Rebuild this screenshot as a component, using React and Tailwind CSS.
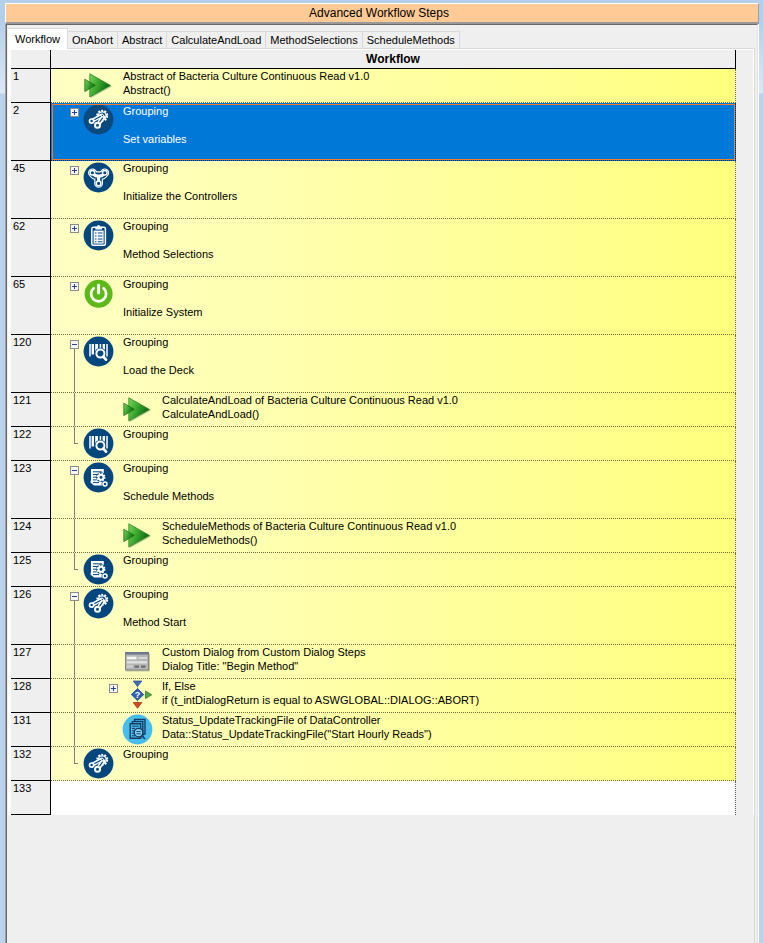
import React, { useState } from "react";

const FONT = "font-['Liberation_Sans',Arial,sans-serif]";

function Disc({ color = "#04477f", children }) {
  return (
    <svg width="32" height="32" viewBox="0 0 32 32" aria-hidden="true">
      <circle cx="15.5" cy="15.5" r="14.9" fill={color} />
      {children}
    </svg>
  );
}

function GearsIcon({ dark }) {
  const base = dark ? "#0a4a7e" : "#04477f";
  return (
    <Disc color={base}>
      <circle cx="19.2" cy="11.8" r="5" fill="none" stroke="#fff" strokeWidth="2" strokeDasharray="1.9 1.24" />
      <circle cx="19.2" cy="11.8" r="3.9" fill={base} stroke="#fff" strokeWidth="1.3" />
      <path d="M8.8 17 L18.6 11.6 M14.8 21.2 L20.4 13.2" stroke="#fff" strokeWidth="4" strokeLinecap="round" />
      <path d="M11.2 15.8 L17.8 12.2 M16 19 L19.8 13.6" stroke={base} strokeWidth="1.2" />
      <circle cx="8.6" cy="17.1" r="2.1" fill={base} stroke="#fff" strokeWidth="1.7" />
      <circle cx="14.5" cy="21.2" r="2.5" fill={base} stroke="#fff" strokeWidth="2" />
      <circle cx="19.4" cy="11.6" r="1.1" fill={base} stroke="#fff" strokeWidth="1" />
    </Disc>
  );
}

function ControllersIcon() {
  return (
    <Disc>
      <g strokeLinecap="round" strokeLinejoin="round" fill="none">
        <path d="M9.4 10.8 Q12 14.5 15.6 13.6 Q19.2 14.5 21.8 10.8 M15.6 14 V21.4" stroke="#fff" strokeWidth="8.8" />
        <path d="M9.4 10.8 Q12 14.5 15.6 13.6 Q19.2 14.5 21.8 10.8 M15.6 14 V21.4" stroke="#04477f" strokeWidth="6.4" />
        <path d="M9.4 10.8 Q12 14.5 15.6 14 Q19.2 14.5 21.8 10.8 M15.6 14 V21.4" stroke="#fff" strokeWidth="3" />
      </g>
      <g fill="#04477f" stroke="#fff" strokeWidth="1.5">
        <circle cx="9.4" cy="10.8" r="2.3" />
        <circle cx="21.8" cy="10.8" r="2.3" />
        <circle cx="15.6" cy="21.4" r="2.3" />
      </g>
    </Disc>
  );
}

function ClipboardIcon() {
  return (
    <Disc>
      <rect x="8.8" y="7.3" width="13.6" height="18" rx="1.5" fill="none" stroke="#fff" strokeWidth="1.5" />
      <path d="M12.3 6.8 h1.8 a1.5 1.8 0 0 1 3 0 h1.8 v2.8 h-6.6z" fill="#fff" />
      <path d="M10.6 10.6 h10 v13 h-10z" fill="#fff" />
      <path d="M11.8 13h1.7M11.8 16h1.7M11.8 19h1.7M11.8 21.8h1.7M14.8 13h4.7M14.8 16h4.7M14.8 19h4.7M14.8 21.8h4.7" stroke="#04477f" strokeWidth="1.1" />
    </Disc>
  );
}

function PowerIcon() {
  return (
    <svg width="32" height="32" viewBox="0 0 32 32" aria-hidden="true">
      <circle cx="15.6" cy="15.8" r="14" fill="#5cb917" />
      <path d="M10.6 10.2 A7.5 7.5 0 1 0 20.6 10.2" fill="none" stroke="#fff" strokeWidth="2.7" strokeLinecap="round" />
      <path d="M15.6 7.2 V15" stroke="#fff" strokeWidth="2.9" strokeLinecap="round" />
    </svg>
  );
}

function BarcodeIcon() {
  return (
    <Disc>
      <path d="M7 8v12.5M17.4 8v6M24 8v12.5" stroke="#fff" strokeWidth="1.5" />
      <path d="M9.8 8v10.5M20.8 8v10.5" stroke="#fff" strokeWidth="2.4" />
      <path d="M13.6 8v10.5" stroke="#fff" strokeWidth="2.8" />
      <circle cx="17.4" cy="17.6" r="5.8" fill="#04477f" />
      <circle cx="17.4" cy="17.6" r="4" fill="none" stroke="#fff" strokeWidth="2" />
      <path d="M20.3 20.6 L23 23.6" stroke="#fff" strokeWidth="2.8" strokeLinecap="round" />
    </Disc>
  );
}

function ScheduleIcon() {
  return (
    <Disc>
      <path d="M8 7 H20.8 V23.5 H11 L7.4 20.5 L8 18z" fill="#fff" />
      <path d="M10 9.8h8.8M10 12.5h4M10 15.2h3M10 17.9h3.6M10 20.6h6" stroke="#04477f" strokeWidth="1" />
      <circle cx="18" cy="15.2" r="4.9" fill="#04477f" />
      <circle cx="18" cy="15.2" r="3.7" fill="none" stroke="#fff" strokeWidth="1.6" strokeDasharray="1.6 1.3" />
      <circle cx="18" cy="15.2" r="2.5" fill="none" stroke="#fff" strokeWidth="2" />
      <circle cx="22" cy="22" r="3.4" fill="#04477f" />
      <circle cx="22" cy="22" r="2" fill="none" stroke="#fff" strokeWidth="1.5" />
    </Disc>
  );
}

function ArrowIcon() {
  return (
    <svg width="32" height="32" viewBox="0 0 32 32" aria-hidden="true">
      <defs>
        <linearGradient id="arrowFill" x1="0" y1="0" x2="1" y2="0.4">
          <stop offset="0" stopColor="#7bd65c" />
          <stop offset="0.5" stopColor="#37a52b" />
          <stop offset="1" stopColor="#0d6410" />
        </linearGradient>
      </defs>
      <path d="M8 6 L29 16.5 L8 28z" fill="#555" opacity="0.3" />
      <path d="M6.8 3.8 L27.6 15.5 L6.8 27z" fill="url(#arrowFill)" stroke="#2c8a22" strokeWidth="0.8" />
      <path d="M1.8 9.2 L12.4 15.3 L1.8 21.6z" fill="url(#arrowFill)" stroke="#25701c" strokeWidth="0.8" />
    </svg>
  );
}

function DialogIcon() {
  return (
    <svg width="32" height="32" viewBox="0 0 32 32" aria-hidden="true">
      <rect x="4" y="8" width="24" height="17.5" fill="#777" opacity="0.45" />
      <rect x="3.5" y="6.5" width="23" height="17.5" fill="#b4b5b5" stroke="#85878a" />
      <rect x="3" y="6" width="24" height="2.5" fill="#6a7990" />
      <path d="M5 12h9.5" stroke="#f6f6f6" strokeWidth="2.6" />
      <path d="M16.5 12h8.5" stroke="#e2e2e2" strokeWidth="1.6" />
      <path d="M5 16.3h20" stroke="#dedede" strokeWidth="2.4" />
      <path d="M5 20.5h6" stroke="#d0d0d0" strokeWidth="2" />
      <path d="M12.5 20.7h4.5M19 20.7h4.5" stroke="#6e6e6e" strokeWidth="2.2" />
    </svg>
  );
}

function BranchIcon() {
  return (
    <svg width="32" height="32" viewBox="0 0 32 32" aria-hidden="true">
      <path d="M15.5 6v18M10 15h14" stroke="#b9c6b0" strokeWidth="1" />
      <path d="M11.2 1h8.6l-4.3 5.6z" fill="#3d6dbb" stroke="#264a88" strokeWidth="0.7" />
      <path d="M11.2 22.5h8.6l-4.3 5.8z" fill="#d5471c" stroke="#8c2c10" strokeWidth="0.7" />
      <path d="M23.5 11 L29.8 14.8 L23.5 18.6z" fill="#4fa93c" stroke="#2b6f22" strokeWidth="0.7" />
      <path d="M15.5 8.6 L21.7 14.6 L15.5 20.6 L9.3 14.6z" fill="#2f62b4" stroke="#1d4384" strokeWidth="0.8" />
      <text x="15.5" y="17.8" fontSize="9" fontWeight="bold" fill="#fff" textAnchor="middle" fontFamily="Liberation Sans, sans-serif">?</text>
    </svg>
  );
}

function TrackingIcon() {
  return (
    <Disc color="#46bdec">
      <g fill="#46bdec" stroke="#173a63" strokeWidth="1.4">
        <path d="M12.6 5.5h10.4v14.5H12.6z" />
        <path d="M10.4 7.6h10.4v14.5H10.4z" />
        <path d="M8.2 9.7h10.4v14.5H8.2z" />
      </g>
      <path d="M10 12.2h6.6M10 14.4h3M10 16.8h2M10 19.2h2M10 21.8h3" stroke="#173a63" strokeWidth="1" />
      <circle cx="16.6" cy="18.6" r="4.3" fill="#7fd3f3" stroke="#173a63" strokeWidth="1.3" />
      <path d="M14.4 17.6h4.4M14.4 19.8h4.4" stroke="#173a63" strokeWidth="0.9" />
      <path d="M19.8 21.8L23 25" stroke="#173a63" strokeWidth="1.7" />
    </Disc>
  );
}

const ROWS = [
  { n: 1, icon: ArrowIcon, lines: ["Abstract of Bacteria Culture Continuous Read v1.0", "Abstract()"] },
  { n: 2, icon: GearsIcon, toggle: "+", tall: true, selected: true, lines: ["Grouping", "", "Set variables"] },
  { n: 45, icon: ControllersIcon, toggle: "+", tall: true, lines: ["Grouping", "", "Initialize the Controllers"] },
  { n: 62, icon: ClipboardIcon, toggle: "+", tall: true, lines: ["Grouping", "", "Method Selections"] },
  { n: 65, icon: PowerIcon, toggle: "+", tall: true, lines: ["Grouping", "", "Initialize System"] },
  { n: 120, icon: BarcodeIcon, toggle: "-", tall: true, lines: ["Grouping", "", "Load the Deck"] },
  { n: 121, icon: ArrowIcon, child: true, lines: ["CalculateAndLoad of Bacteria Culture Continuous Read v1.0", "CalculateAndLoad()"] },
  { n: 122, icon: BarcodeIcon, end: true, lines: ["Grouping"] },
  { n: 123, icon: ScheduleIcon, toggle: "-", tall: true, lines: ["Grouping", "", "Schedule Methods"] },
  { n: 124, icon: ArrowIcon, child: true, lines: ["ScheduleMethods of Bacteria Culture Continuous Read v1.0", "ScheduleMethods()"] },
  { n: 125, icon: ScheduleIcon, end: true, lines: ["Grouping"] },
  { n: 126, icon: GearsIcon, toggle: "-", tall: true, lines: ["Grouping", "", "Method Start"] },
  { n: 127, icon: DialogIcon, child: true, lines: ["Custom Dialog from Custom Dialog Steps", 'Dialog Title: "Begin Method"'] },
  { n: 128, icon: BranchIcon, child: true, toggle: "+", lines: ["If, Else", "if (t_intDialogReturn is equal to ASWGLOBAL::DIALOG::ABORT)"] },
  { n: 131, icon: TrackingIcon, child: true, lines: ["Status_UpdateTrackingFile of DataController", 'Data::Status_UpdateTrackingFile("Start Hourly Reads")'] },
  { n: 132, icon: GearsIcon, end: true, lines: ["Grouping"] },
  { n: 133, blank: true },
];

const TABS = ["Workflow", "OnAbort", "Abstract", "CalculateAndLoad", "MethodSelections", "ScheduleMethods"];

function Toggle({ kind, label }) {
  return (
    <button
      type="button"
      aria-label={label}
      className="block size-[9px] shrink-0 border border-[#8c8c8c] bg-[#f6f6f6]"
    >
      <svg width="7" height="7" viewBox="0 0 7 7" shapeRendering="crispEdges" className="block" aria-hidden="true">
        <path d={kind === "+" ? "M1 3.5h5M3.5 1v5" : "M1 3.5h5"} stroke="#2d3f8f" strokeWidth="1" />
      </svg>
    </button>
  );
}

function Gutter({ row }) {
  return (
    <div className="flex w-8 shrink-0 flex-col pl-[19px]">
      {row.toggle && (
        <>
          <div className="h-[5px]" />
          <Toggle kind={row.toggle} label={(row.toggle === "+" ? "Expand step " : "Collapse step ") + row.n} />
          {row.toggle === "-" && <div className="ml-1 w-px flex-1 bg-[#808080]" />}
        </>
      )}
      {row.end && <div className="ml-1 h-[17px] w-1 border-b border-l border-[#808080]" />}
    </div>
  );
}

function StepContent({ row }) {
  const Icon = row.icon;
  return (
    <div className={"flex items-stretch " + (row.tall ? "h-[57px]" : "h-[33px]")}>
      {row.child && (
        <div className="w-[39px] shrink-0 pl-[23px]">
          <div className="h-full w-px bg-[#808080]" />
        </div>
      )}
      <Gutter row={row} />
      <div className="w-10 shrink-0 pt-px">
        <Icon dark={row.selected} />
      </div>
      <div className={"whitespace-nowrap" + (row.selected ? " pt-px" : "")}>
        {row.lines.map((line, i) => (
          <div key={i} className="h-[14px]">{line}</div>
        ))}
      </div>
    </div>
  );
}

function StepRow({ row }) {
  let fill = "border-[#6f6f3a] bg-linear-to-r from-[#ffffc4] to-[#ffff7d]";
  if (row.selected) fill = "border-[#00284f] bg-[#0078d7] text-white outline-1 -outline-offset-2 outline-[#f08030]";
  if (row.blank) fill = "border-[#555] bg-white";
  return (
    <tr aria-selected={row.selected ? true : undefined}>
      <th scope="row" className="border-r border-b border-black bg-[#efefef] pl-[2px] text-left align-top font-normal">
        {row.n}
      </th>
      <td className={"border-r border-dotted p-0 align-top " + (row.blank ? "h-[34px] " : "border-b ") + fill}>
        {!row.blank && <StepContent row={row} />}
      </td>
    </tr>
  );
}

export default function App() {
  const [tab, setTab] = useState("Workflow");
  return (
    <div
      className={
        "flex min-h-screen flex-col bg-[#bad2ec] bg-[linear-gradient(#b5cfea_20px,#dce8f5_93px,#bad2ec_94px)] pt-[3px] pr-1 pl-[5px] text-black " +
        FONT
      }
    >
      <h1 className="h-[21px] border-t border-r border-b-2 border-l border-t-white border-r-[#a0a0a0] border-b-[#999] border-l-white bg-[#ffca96] pr-[6px] text-center text-[12px] leading-[18px]">
        Advanced Workflow Steps
      </h1>
      <div className="flex flex-1 flex-col border-r border-l border-r-white border-l-[#a0a0a0]">
        <div className="flex flex-1 flex-col border-t border-r border-l border-t-[#696969] border-r-[#e3e3e3] border-l-[#696969] bg-[#efefef] pr-[2px] pl-px">
          <div role="tablist" className="flex items-end pt-[3px] text-[11px]">
            {TABS.map((name) => (
              <button
                key={name}
                type="button"
                role="tab"
                aria-selected={tab === name}
                onClick={() => setTab(name)}
                className={
                  "border-t border-r border-[#d9d9d9] " +
                  (tab === name ? "relative -mb-px h-[21px] bg-white px-[7px]" : "h-[17px] px-1")
                }
              >
                {name}
              </button>
            ))}
          </div>
          <div role="tabpanel" className="flex-1 border-t border-r border-[#d9d9d9]">
            <div className="h-full border-t border-r border-l-[3px] border-white pr-[17px]">
              <table className="w-full table-fixed border-separate border-spacing-0 text-[11px] leading-[14px]">
                <colgroup>
                  <col className="w-10" />
                  <col />
                </colgroup>
                <thead>
                  <tr>
                    <td className="h-[19px] border-r border-b border-black p-0" />
                    <th scope="col" className="border-r border-b border-black p-0 text-center text-[12px] font-bold">
                      Workflow
                    </th>
                  </tr>
                </thead>
                <tbody>
                  {ROWS.map((row) => (
                    <StepRow key={row.n} row={row} />
                  ))}
                </tbody>
              </table>
            </div>
          </div>
        </div>
      </div>
    </div>
  );
}
